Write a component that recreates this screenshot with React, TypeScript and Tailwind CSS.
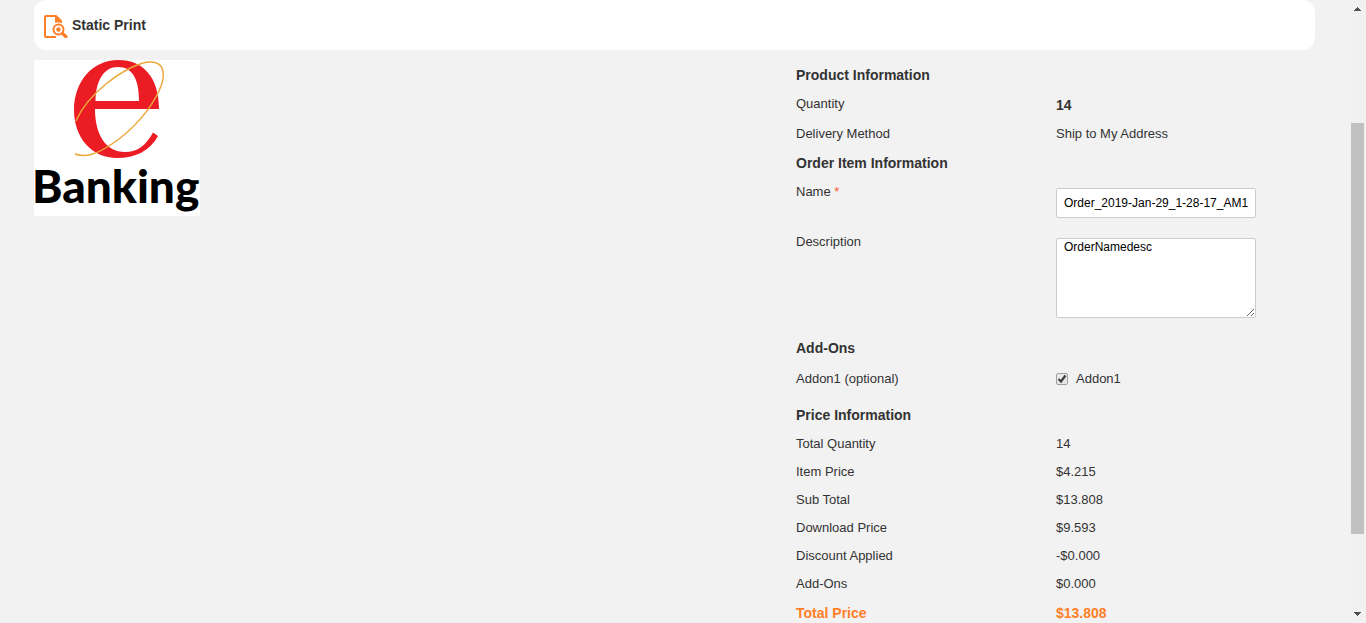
import { useState } from "react";
import type { ReactNode } from "react";

function PrintPreviewIcon() {
  return (
    <svg width="26" height="26" viewBox="0 0 26 26" fill="none" stroke="#ff7f27" strokeWidth="2" className="shrink-0" aria-hidden="true">
      <path d="M14 25H4Q3 25 3 24V5Q3 4 4 4H14L19 9V11" strokeLinejoin="round" />
      <path d="M13 3.500L20 10.500H13Z" fill="#ff7f27" stroke="none" />
      <circle cx="16.500" cy="17.500" r="6.500" fill="#fff" stroke="none" />
      <circle cx="16.500" cy="17.500" r="5" />
      <circle cx="16.500" cy="17.500" r="2.200" fill="#ff7f27" stroke="none" />
      <path d="M20.500 21.500L24 24.700" strokeWidth="3.200" strokeLinecap="round" />
    </svg>
  );
}

function BankingLogo() {
  return (
    <svg width="166" height="156" viewBox="0 0 166 156" className="block overflow-visible bg-white" role="img" aria-label="e Banking">
      <path
        fill="#ec1c24"
        fillRule="evenodd"
        d="M61 49H125C125 18 110 0 84 0C58 0 40 22 40 50C40 78 58 98 83 98C101 98 116 91 124 76L119 72.500C112 85 104 92 91 92C72 92 61 75 61 49ZM61.500 41C62 20 70 7 84 7C99 7 105 20 105 41Z"
      />
      <path
        fill="none"
        stroke="#eaa83a"
        strokeWidth="1.500"
        d="M42 61C48 47 61 33 72 24C88 11 107 1 118 2C131 3 132 16 125 31C116 50 99 70 78 84C63 94 52 98 41 94"
      />
      <text x="-2" y="143" fontSize="46" className="fill-black font-[Lato] font-black">
        Banking
      </text>
    </svg>
  );
}

function Heading({ children }: { children: ReactNode }) {
  return <h2 className="text-sm leading-[30px] font-bold">{children}</h2>;
}

function Row({ label, children }: { label: string; children: ReactNode }) {
  return (
    <div className="flex leading-7">
      <dt className="w-[260px] shrink-0">{label}</dt>
      <dd>{children}</dd>
    </div>
  );
}

const prices: [string, string][] = [
  ["Total Quantity", "14"],
  ["Item Price", "$4.215"],
  ["Sub Total", "$13.808"],
  ["Download Price", "$9.593"],
  ["Discount Applied", "-$0.000"],
  ["Add-Ons", "$0.000"],
];

function ScrollBar() {
  return (
    <div className="flex w-[17px] shrink-0 flex-col items-center bg-[#f1f1f1] py-[7px]" aria-hidden="true">
      <svg width="7" height="4" viewBox="0 0 7 4" fill="#505050" shapeRendering="crispEdges">
        <path d="M3 0H4V1H5V2H6V3H7V4H0V3H1V2H2V1H3Z" />
      </svg>
      <div className="flex w-[13px] grow flex-col py-1">
        <div className="grow-[108]" />
        <div className="grow-[411] bg-[#c1c1c1]" />
        <div className="grow-[74]" />
      </div>
      <svg width="7" height="4" viewBox="0 0 7 4" fill="#505050" shapeRendering="crispEdges">
        <path d="M0 0H7V1H6V2H5V3H4V4H3V3H2V2H1V1H0Z" />
      </svg>
    </div>
  );
}

export default function App() {
  const [name, setName] = useState("Order_2019-Jan-29_1-28-17_AM1");
  const [description, setDescription] = useState("OrderNamedesc");
  const [addon, setAddon] = useState(true);

  return (
    <div className="flex h-screen overflow-hidden bg-[#f2f2f2] font-['Liberation_Sans',Arial,sans-serif] text-[13px] text-[#333]">
      <main className="min-w-0 grow px-[34px]">
        <header className="flex h-[50px] items-center gap-1 rounded-xl bg-white pl-2">
          <PrintPreviewIcon />
          <h1 className="text-sm font-bold">Static Print</h1>
        </header>
        <div className="flex justify-between pt-[10px]">
          <BankingLogo />
          <section className="w-[519px] shrink-0">
            <Heading>Product Information</Heading>
            <dl>
              <Row label="Quantity">
                <b className="text-sm leading-[30px]">14</b>
              </Row>
              <Row label="Delivery Method">Ship to My Address</Row>
            </dl>
            <Heading>Order Item Information</Heading>
            <div className="flex pb-5">
              <label htmlFor="order-name" className="w-[260px] shrink-0 leading-7">
                Name <span className="text-[#ff5a36]">*</span>
              </label>
              <input
                id="order-name"
                value={name}
                onChange={(e) => setName(e.target.value)}
                className="mt-[10px] h-[30px] w-[200px] rounded-xs border border-[#ccc] bg-white px-[7px] text-xs text-black"
              />
            </div>
            <div className="flex pb-[15px]">
              <label htmlFor="order-description" className="w-[260px] shrink-0 leading-[8px]">
                Description
              </label>
              <textarea
                id="order-description"
                value={description}
                onChange={(e) => setDescription(e.target.value)}
                className="h-20 w-[200px] resize rounded-xs border border-[#ccc] bg-white px-[7px] text-xs text-black"
              />
            </div>
            <Heading>Add-Ons</Heading>
            <div className="flex pb-[5px] leading-8">
              <span className="w-[260px] shrink-0">Addon1 (optional)</span>
              <label className="flex items-center gap-2">
                <span className="relative flex size-3">
                  <input
                    type="checkbox"
                    checked={addon}
                    onChange={(e) => setAddon(e.target.checked)}
                    className="size-3 appearance-none rounded-xs border border-[#a0a0a0] bg-[#e8e8e8]"
                  />
                  {addon && (
                    <svg viewBox="0 0 12 12" className="pointer-events-none absolute inset-0" fill="none" stroke="#404040" strokeWidth="2.200" aria-hidden="true">
                      <path d="M2.500 6L5 8.500L9.500 2.500" />
                    </svg>
                  )}
                </span>
                Addon1
              </label>
            </div>
            <Heading>Price Information</Heading>
            <dl>
              {prices.map(([label, value]) => (
                <Row key={label} label={label}>
                  {value}
                </Row>
              ))}
              <div className="flex text-sm leading-[30px] font-bold text-[#ff7f27]">
                <dt className="w-[260px] shrink-0">Total Price</dt>
                <dd>$13.808</dd>
              </div>
            </dl>
          </section>
        </div>
      </main>
      <ScrollBar />
    </div>
  );
}
